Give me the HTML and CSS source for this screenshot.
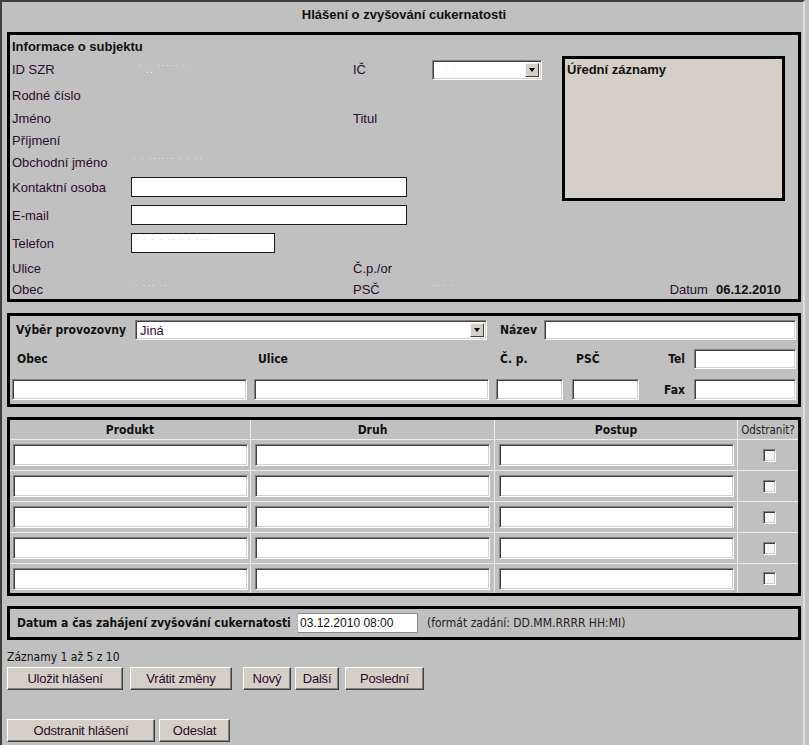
FILE: index.html
```html
<!DOCTYPE html>
<html lang="cs">
<head>
<meta charset="utf-8">
<title>Hlášení o zvyšování cukernatosti</title>
<link rel="stylesheet" href="styles.css">
</head>
<body>
<div class="frame">
  <div class="title">Hlášení o zvyšování cukernatosti</div>

  <div class="box info">
    <div class="hd">Informace o subjektu</div>

    <div class="lbl c1 r2">ID SZR</div>
    <div class="blur c2 r2 blur-id">˙ .. ˙˙˙˙˙ ˙</div>
    <div class="lbl c3 r2">IČ</div>
    <div class="c4 r2 selwrap"><div class="sel sel-ic"><span class="blur">˙ ˙ ˙</span><span class="arrow"></span></div></div>

    <div class="lbl c1 r3">Rodné číslo</div>
    <div class="lbl c1 r4">Jméno</div>
    <div class="lbl c3 r4">Titul</div>
    <div class="lbl c1 r5">Příjmení</div>
    <div class="lbl c1 r6">Obchodní jméno</div>
    <div class="blur c2 r6 blur-ob">˙ ˙ ˙˙˙˙˙˙ ˙ ˙ ˙˙</div>

    <div class="lbl c1 r7">Kontaktní osoba</div>
    <div class="c2 r7 fld"><span class="tx tx-long"></span></div>
    <div class="lbl c1 r8">E-mail</div>
    <div class="c2 r8 fld"><span class="tx tx-long"></span></div>
    <div class="lbl c1 r9">Telefon</div>
    <div class="c2 r9 fld"><span class="tx tx-short"><span class="blur">˙ ˙ ˙ ˙ ˙˙ ˙ ˙ ˙˙˙˙</span></span></div>

    <div class="lbl c1 r10">Ulice</div>
    <div class="lbl c3 r10">Č.p./or</div>
    <div class="lbl c1 r11">Obec</div>
    <div class="blur c2 r11 blur-obec">˙ ˙˙˙ ˙˙</div>
    <div class="lbl c3 r11">PSČ</div>
    <div class="blur c4 r11 blur-psc">˙˙˙ ˙</div>
    <div class="datum r11"><span class="dlab">Datum</span><b>06.12.2010</b></div>

    <div class="records">Úřední záznamy</div>
  </div>

  <div class="box prov">
    <div class="prow">
      <div class="plab">Výběr provozovny</div>
      <div class="sel sel-prov"><span class="seltext">Jiná</span><span class="arrow"></span></div>
      <div class="plab nazev">Název</div>
      <span class="in in-nazev"></span>
    </div>
    <div class="pgrid">
      <div class="glab">Obec</div>
      <div class="glab">Ulice</div>
      <div class="glab">Č. p.</div>
      <div class="glab">PSČ</div>
      <div class="glab rlab">Tel</div>
      <span class="in"></span>

      <span class="in"></span>
      <span class="in"></span>
      <span class="in"></span>
      <span class="in"></span>
      <div class="glab rlab">Fax</div>
      <span class="in"></span>
    </div>
  </div>

  <div class="box tblbox">
    <div class="tbl">
      <div class="th">Produkt</div>
      <div class="th">Druh</div>
      <div class="th">Postup</div>
      <div class="th th-small">Odstranit?</div>

      <div class="td"><span class="in in-cell"></span></div>
      <div class="td"><span class="in in-cell"></span></div>
      <div class="td"><span class="in in-cell"></span></div>
      <div class="td"><span class="chk"></span></div>

      <div class="td"><span class="in in-cell"></span></div>
      <div class="td"><span class="in in-cell"></span></div>
      <div class="td"><span class="in in-cell"></span></div>
      <div class="td"><span class="chk"></span></div>

      <div class="td"><span class="in in-cell"></span></div>
      <div class="td"><span class="in in-cell"></span></div>
      <div class="td"><span class="in in-cell"></span></div>
      <div class="td"><span class="chk"></span></div>

      <div class="td"><span class="in in-cell"></span></div>
      <div class="td"><span class="in in-cell"></span></div>
      <div class="td"><span class="in in-cell"></span></div>
      <div class="td"><span class="chk"></span></div>

      <div class="td"><span class="in in-cell"></span></div>
      <div class="td"><span class="in in-cell"></span></div>
      <div class="td"><span class="in in-cell"></span></div>
      <div class="td"><span class="chk"></span></div>
    </div>
  </div>

  <div class="box start">
    <div class="slab">Datum a čas zahájení zvyšování cukernatosti</div>
    <span class="dtin">03.12.2010 08:00</span>
    <span class="hint">(formát zadání: DD.MM.RRRR HH:MI)</span>
  </div>

  <div class="count">Záznamy 1 až 5 z 10</div>
  <div class="btns">
    <span class="btn b-ulozit">Uložit hlášení</span>
    <span class="btn b-vratit">Vrátit změny</span>
    <span class="btn b-novy">Nový</span>
    <span class="btn b-dalsi">Další</span>
    <span class="btn b-posl">Poslední</span>
  </div>
  <div class="btns btns2">
    <span class="btn b-odstr">Odstranit hlášení</span>
    <span class="btn b-odeslat">Odeslat</span>
  </div>
</div>
</body>
</html>
```

FILE: styles.css
```css
* { box-sizing: border-box; }
html, body { margin: 0; padding: 0; background: #c0c0c0; }
body {
  font-family: "Liberation Sans", Arial, sans-serif;
  font-size: 13px;
  color: #2b0b2b;
}
.frame {
  width: 805px;
  border-top: 2px solid #404040;
  border-left: 2px solid #404040;
  border-right: 2px solid #dedede;
  padding: 0 2px 30px 5px;
}
.title {
  height: 26px;
  line-height: 26px;
  text-align: center;
  font-weight: bold;
  font-size: 13px;
  color: #111;
  margin-bottom: 4px;
}
.box {
  border: 3px solid #000;
  width: 794px;
}

/* ---------- section 1 ---------- */
.info {
  display: grid;
  grid-template-columns: 121px 222px 79px 130px 223px 13px;
  grid-template-rows: 21px 27px 24px 22px 22px 22px 28px 28px 28px 22px 20px;
}
.info > div { display: flex; align-items: center; }
.info > .hd { font-weight: bold; color: #111; padding-left: 2px; grid-row: 1; grid-column: 1 / 5; padding-top: 1px; }
.c1 { grid-column: 1; padding-left: 2px; }
.c2 { grid-column: 2; }
.c3 { grid-column: 3; }
.c4 { grid-column: 4; }
.r2 { grid-row: 2; } .r3 { grid-row: 3; } .r4 { grid-row: 4; } .r5 { grid-row: 5; }
.r6 { grid-row: 6; } .r7 { grid-row: 7; } .r8 { grid-row: 8; } .r9 { grid-row: 9; }
.r10 { grid-row: 10; } .r11 { grid-row: 11; }
.lbl { white-space: nowrap; }
.blur { color: #f2f2f2; font-size: 10px; letter-spacing: 1px; white-space: nowrap; }
.blur-id { padding-left: 7px; }
.blur-ob { padding-left: 2px; }
.blur-obec { padding-left: 4px; }
.blur-psc { padding-left: 1px; }
.tx {
  display: block;
  flex-shrink: 0;
  height: 20px;
  background: #fff;
  border: 1px solid #1a1a1a;
  padding-left: 3px;
  line-height: 18px;
}
.tx .blur { color: #c8c8c8; }
.tx-long { width: 276px; }
.tx-short { width: 144px; }
.info > .fld { overflow: visible; min-width: 0; }
.sel {
  display: flex;
  align-items: center;
  background: #fff;
  border: 1px solid;
  border-color: #808080 #fff #fff #808080;
  box-shadow: inset 1px 1px 0 #404040, inset -1px -1px 0 #d4d0c8;
  position: relative;
  height: 20px;
  flex-shrink: 0;
}
.sel-ic { width: 110px; padding-left: 4px; }
.sel-ic .blur { color: #d0d0d0; }
.arrow {
  position: absolute;
  right: 2px;
  top: 2px;
  width: 14px;
  height: 14px;
  background: #d4d0c8;
  border: 1px solid;
  border-color: #f4f4f4 #404040 #404040 #f4f4f4;
}
.arrow::after {
  content: "";
  position: absolute;
  left: 3px;
  top: 4px;
  border-left: 3.5px solid transparent;
  border-right: 3.5px solid transparent;
  border-top: 4px solid #000;
}
.info > .datum {
  grid-column: 4 / 6;
  justify-content: flex-end;
  padding-right: 4px;
}
.dlab { margin-right: 8px; }
.datum b { color: #111; }
.info > .records {
  grid-column: 5;
  grid-row: 2 / 8;
  background: #d4d0c8;
  border: 3px solid #000;
  font-weight: bold;
  color: #111;
  align-items: flex-start;
  padding: 3px 0 0 2px;
}

/* ---------- section 2 ---------- */
.prov {
  margin-top: 11px;
  padding: 4px 2px 4px 2px;
  font-family: "DejaVu Sans Condensed", "DejaVu Sans", sans-serif;
  font-size: 12px;
  color: #111;
}
.prow { display: flex; align-items: center; height: 20px; }
.plab { font-weight: bold; width: 123px; padding-left: 4px; white-space: nowrap; flex-shrink: 0; }
.sel-prov { width: 352px; padding-left: 4px; font-family: "Liberation Sans", Arial, sans-serif; font-size: 13px; color: #3a0a3a; }
.nazev { width: 57px; padding-left: 13px; }
.in {
  display: block;
  height: 21px;
  background: #fff;
  border: 1px solid;
  border-color: #808080 #fff #fff #808080;
  box-shadow: inset 1px 1px 0 #404040, inset -1px -1px 0 #d4d0c8;
  flex-shrink: 0;
}
.in-nazev { width: 252px; height: 20px; }
.pgrid {
  margin-top: 9px;
  display: grid;
  grid-template-columns: 235px 7px 235px 7px 67px 9px 67px 55px 102px;
  grid-template-rows: 20px 21px;
  row-gap: 10px;
}
.pgrid > :nth-child(1), .pgrid > :nth-child(7) { grid-column: 1; }
.pgrid > :nth-child(2), .pgrid > :nth-child(8) { grid-column: 3; }
.pgrid > :nth-child(3), .pgrid > :nth-child(9) { grid-column: 5; }
.pgrid > :nth-child(4), .pgrid > :nth-child(10) { grid-column: 7; }
.pgrid > :nth-child(5), .pgrid > :nth-child(11) { grid-column: 8; }
.pgrid > :nth-child(6), .pgrid > :nth-child(12) { grid-column: 9; }
.pgrid > :nth-child(6) { height: 20px; }
.glab { font-weight: bold; display: flex; align-items: center; padding-left: 4px; }
.pgrid > :nth-child(1) { padding-left: 5px; }
.rlab { justify-content: flex-end; padding-right: 9px; }

/* ---------- section 3 ---------- */
.tblbox { margin-top: 10px; }
.tbl {
  display: grid;
  grid-template-columns: 240px 243px 242px 60px;
  grid-template-rows: 19px repeat(4, 30px) 29px;
  gap: 1px;
  background: #ececec;
  font-family: "DejaVu Sans Condensed", "DejaVu Sans", sans-serif;
}
.th, .td { background: #c0c0c0; display: flex; align-items: center; justify-content: center; }
.th { font-weight: bold; font-size: 12px; color: #111; }
.th-small { font-weight: normal; font-size: 11.5px; color: #222; }
.in-cell { width: 235px; height: 22px; }
.chk {
  display: block;
  width: 13px;
  height: 13px;
  background: #f4f4f4;
  border: 1px solid;
  border-color: #808080 #fff #fff #808080;
  box-shadow: inset 1px 1px 0 #404040, inset -1px -1px 0 #d4d0c8;
  margin-left: 3px;
}

/* ---------- section 4 ---------- */
.start {
  margin-top: 10px;
  height: 34px;
  display: flex;
  align-items: center;
  font-family: "DejaVu Sans Condensed", "DejaVu Sans", sans-serif;
  font-size: 12px;
}
.slab { width: 287px; padding-left: 7px; font-weight: bold; color: #111; white-space: nowrap; flex-shrink: 0; }
.dtin {
  width: 121px;
  height: 20px;
  flex-shrink: 0;
  background: #fff;
  border: 1px solid #8a8a8a;
  border-left-color: #a9b8c8;
  font-family: "Liberation Sans", Arial, sans-serif;
  font-size: 12px;
  color: #111;
  line-height: 18px;
  padding-left: 2px;
}
.hint { margin-left: 9px; color: #2a1a2a; white-space: nowrap; }

/* ---------- bottom ---------- */
.count {
  margin-top: 10px;
  height: 14px;
  line-height: 14px;
  font-family: "DejaVu Sans Condensed", "DejaVu Sans", sans-serif;
  font-size: 12px;
  color: #111;
}
.btns { display: flex; margin-top: 3px; }
.btns2 { margin-top: 29px; }
.btn {
  height: 23px;
  background: #d4d0c8;
  border: 1px solid;
  border-color: #fff #404040 #404040 #fff;
  box-shadow: inset -1px -1px 0 #808080;
  display: flex;
  align-items: center;
  justify-content: center;
  font-size: 13px;
  letter-spacing: -0.2px;
  color: #2b0b2b;
  white-space: nowrap;
}
.b-ulozit { width: 116px; }
.b-vratit { width: 102px; margin-left: 7px; }
.b-novy { width: 48px; margin-left: 11px; }
.b-dalsi { width: 44px; margin-left: 4px; }
.b-posl { width: 79px; margin-left: 6px; }
.b-odstr { width: 148px; }
.b-odeslat { width: 71px; margin-left: 4px; }
```
